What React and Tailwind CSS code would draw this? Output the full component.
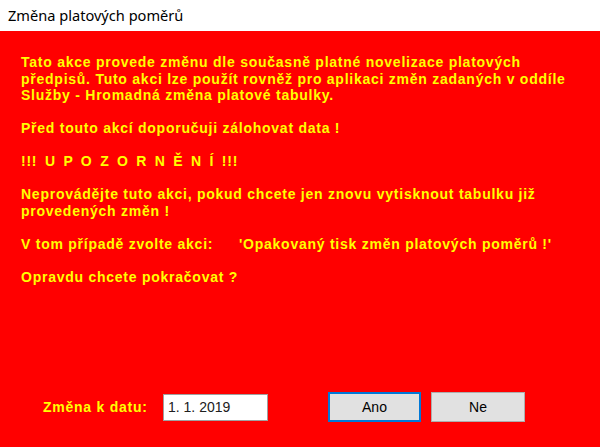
import React from "react";

const App = () => {
    return (
        <div className="w-[600px] h-[447px] flex flex-col bg-white overflow-hidden">
            {/* Titulek okna */}
            <div className="h-[31px] shrink-0 flex items-center px-2 bg-white text-black text-[14.6px] font-['Noto_Sans',sans-serif]">
                Změna platových poměrů
            </div>

            {/* Obsah dialogu */}
            <div className="flex-1 flex flex-col bg-[#ff0000] pl-[21px] pt-[23px] pb-[25px] text-[#ffff00] font-bold text-[14px] leading-[16.5px] tracking-[0.75px] font-['Liberation_Sans',Arial,sans-serif] whitespace-nowrap">
                <p>
                    Tato akce provede změnu dle současně platné novelizace platových<br />
                    předpisů. Tuto akci lze použít rovněž pro aplikaci změn zadaných v oddíle<br />
                    Služby - Hromadná změna platové tabulky.
                </p>
                <p className="mt-[16.5px]">Před touto akcí doporučuji zálohovat data !</p>
                <p className="mt-[16.5px] [word-spacing:3px]">!!! U P O Z O R N Ě N Í !!!</p>
                <p className="mt-[16.5px]">
                    Neprovádějte tuto akci, pokud chcete jen znovu vytisknout tabulku již<br />
                    provedených změn !
                </p>
                <p className="mt-[16.5px] flex">
                    <span className="w-[218px]">V tom případě zvolte akci:</span>
                    <span>'Opakovaný tisk změn platových poměrů !'</span>
                </p>
                <p className="mt-[16.5px]">Opravdu chcete pokračovat ?</p>

                {/* Spodní řádek */}
                <div className="mt-auto flex items-center">
                    <span className="ml-[22px] w-[120px] text-[14px]">Změna k datu:</span>
                    <div className="w-[105px] h-[27px] bg-white border border-[#a0a0a0] flex items-center px-[4px] text-[14px] font-normal tracking-normal text-[#202020]">
                        1. 1. 2019
                    </div>
                    <button className="ml-[60px] w-[93px] h-[30px] bg-[#e1e1e1] border-2 border-[#0078d7] text-[14px] font-normal tracking-normal text-black">
                        Ano
                    </button>
                    <button className="ml-[10px] w-[94px] h-[30px] bg-[#e1e1e1] border border-[#adadad] text-[14px] font-normal tracking-normal text-black">
                        Ne
                    </button>
                </div>
            </div>
        </div>
    );
};

export default App;
